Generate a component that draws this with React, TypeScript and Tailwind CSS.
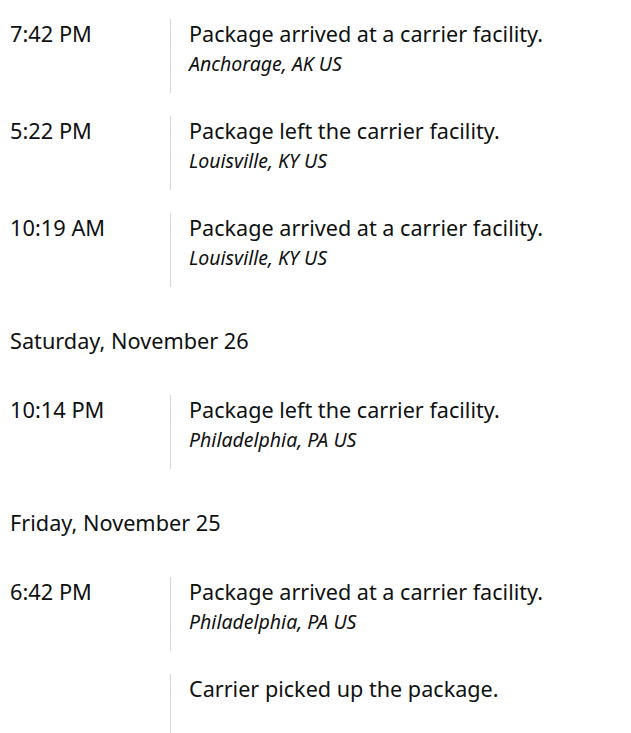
import React from "react";

type Ev = { time?: string; title: string; loc?: string };
type Item = { kind: "ev"; ev: Ev } | { kind: "day"; label: string };

const items: Item[] = [
  { kind: "ev", ev: { time: "7:42 PM", title: "Package arrived at a carrier facility.", loc: "Anchorage, AK US" } },
  { kind: "ev", ev: { time: "5:22 PM", title: "Package left the carrier facility.", loc: "Louisville, KY US" } },
  { kind: "ev", ev: { time: "10:19 AM", title: "Package arrived at a carrier facility.", loc: "Louisville, KY US" } },
  { kind: "day", label: "Saturday, November 26" },
  { kind: "ev", ev: { time: "10:14 PM", title: "Package left the carrier facility.", loc: "Philadelphia, PA US" } },
  { kind: "day", label: "Friday, November 25" },
  { kind: "ev", ev: { time: "6:42 PM", title: "Package arrived at a carrier facility.", loc: "Philadelphia, PA US" } },
  { kind: "ev", ev: { title: "Carrier picked up the package." } },
];

function Row({ ev }: { ev: Ev }) {
  return (
    <div className="flex h-[74px] mb-[23px]">
      <div className="w-[160px] shrink-0 text-[21.8px] leading-[30px]">{ev.time}</div>
      <div className="w-px bg-[#d5d9d9] shrink-0" />
      <div className="pl-[18px]">
        <div className="text-[21.6px] leading-[30px]">{ev.title}</div>
        {ev.loc && <div className="text-[19.5px] leading-[26px] mt-[2px] italic">{ev.loc}</div>}
      </div>
    </div>
  );
}

export default function App() {
  return (
    <div
      className="bg-white text-[#0f1111] pl-[10px] pt-[19px] w-[631px] h-[733px] overflow-hidden"
      style={{ fontFamily: '"Noto Sans", "Open Sans", sans-serif' }}
    >
      {items.map((it, i) =>
        it.kind === "ev" ? (
          <Row key={i} ev={it.ev} />
        ) : (
          <div key={i} className="h-[62px] mb-[23px] flex items-center text-[21.7px]">
            {it.label}
          </div>
        )
      )}
    </div>
  );
}
